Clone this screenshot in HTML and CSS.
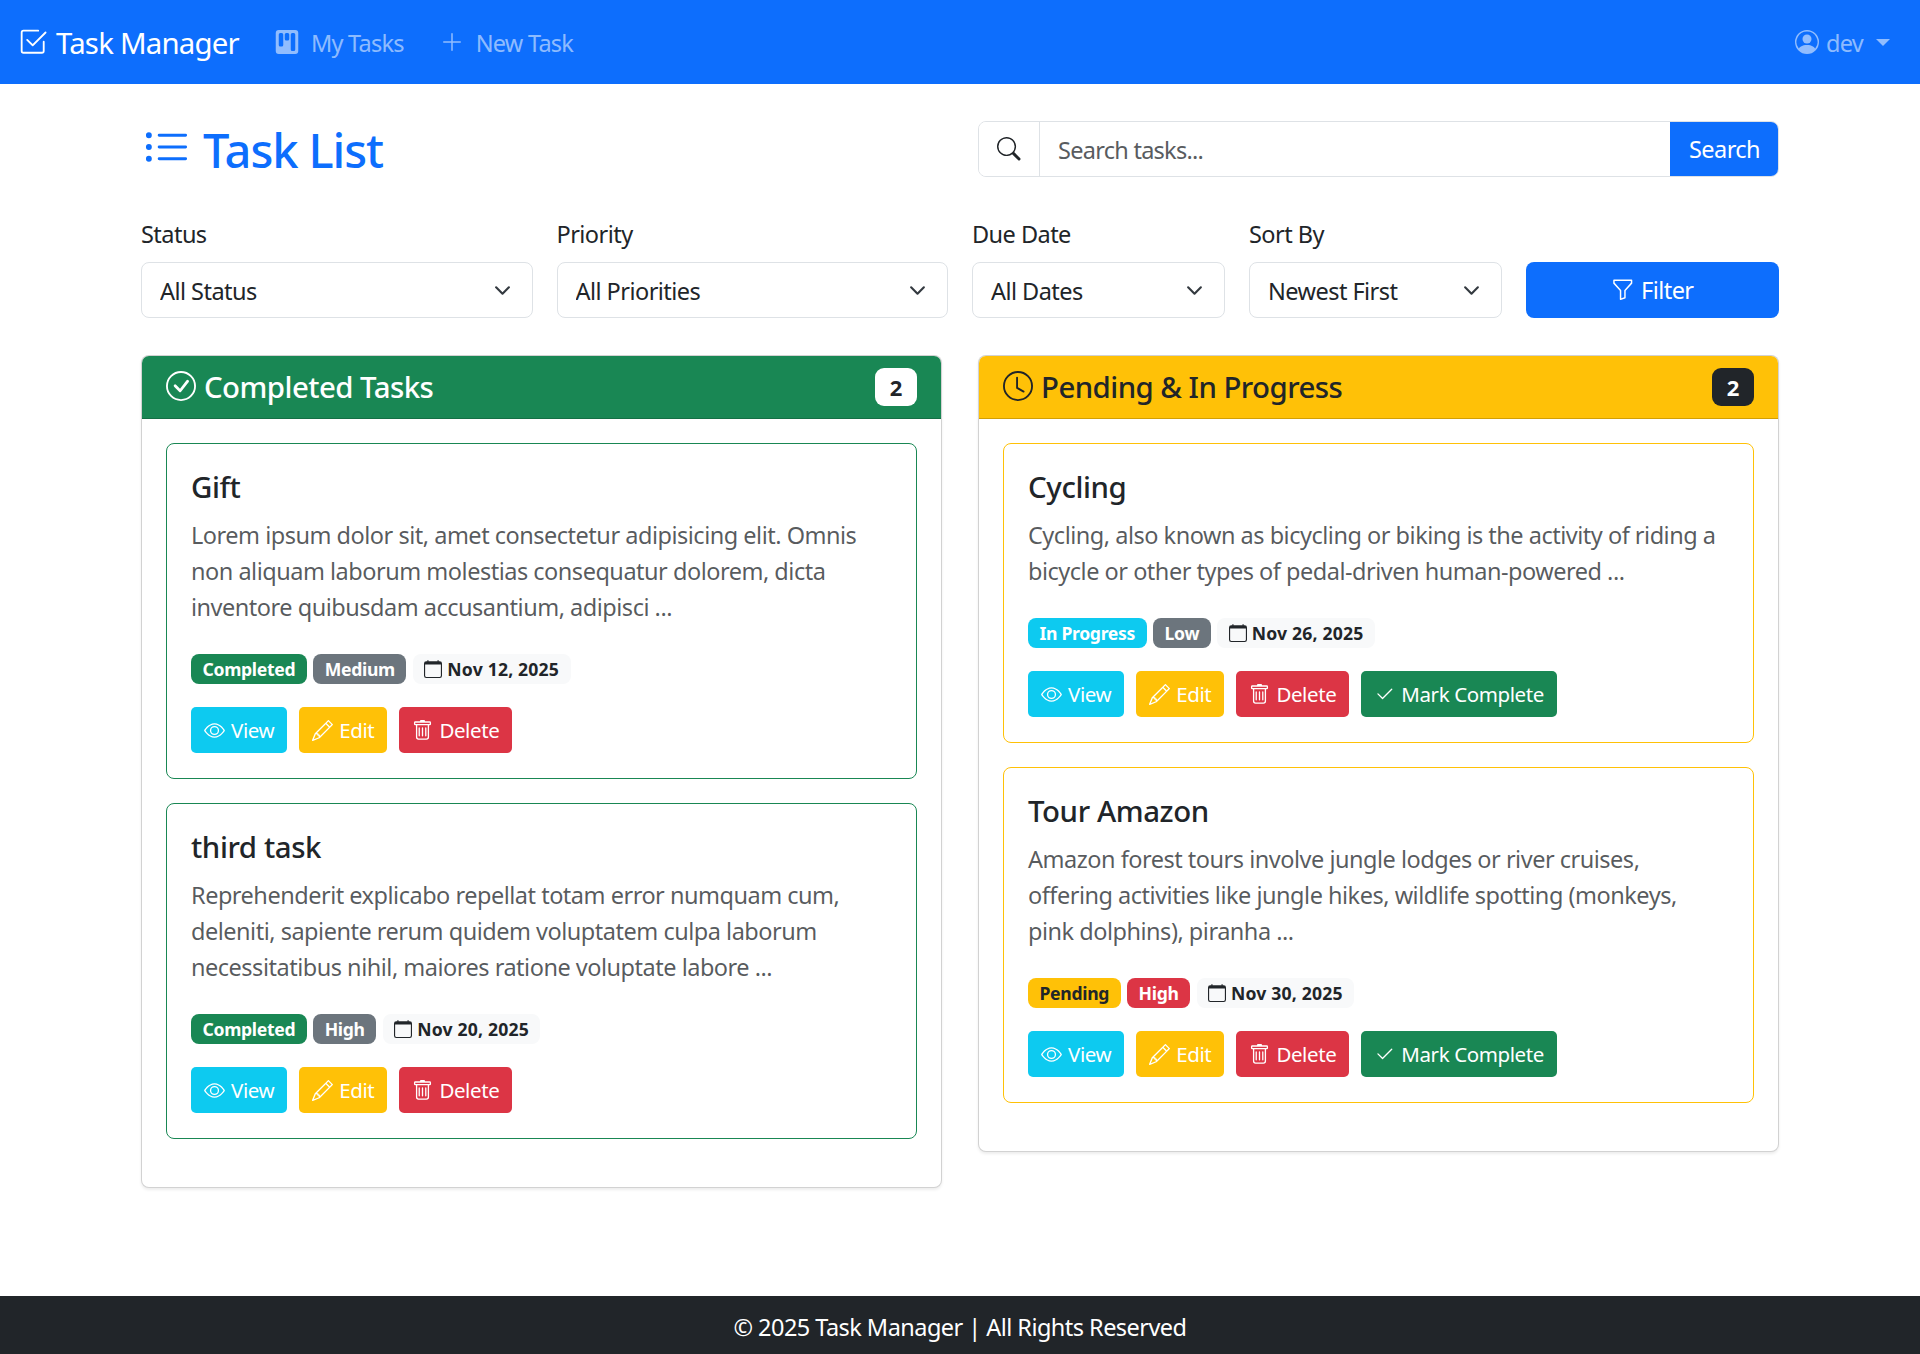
FILE: index.html
```html
<!DOCTYPE html>
<html lang="en">
<head>
<meta charset="utf-8">
<title>Task Manager</title>
<link rel="stylesheet" href="styles.css">
</head>
<body>
<nav class="navbar">
  <a class="brand" href="#"><svg class="icon brand-icon" viewBox="0 0 16 16"><path d="M3 14.5A1.5 1.5 0 0 1 1.5 13V3A1.5 1.5 0 0 1 3 1.5h8a.5.5 0 0 1 0 1H3a.5.5 0 0 0-.5.5v10a.5.5 0 0 0 .5.5h10a.5.5 0 0 0 .5-.5V8a.5.5 0 0 1 1 0v5a1.5 1.5 0 0 1-1.5 1.5z"/><path d="m8.354 10.354 7-7a.5.5 0 0 0-.708-.708L8 9.293 5.354 6.646a.5.5 0 1 0-.708.708l3 3a.5.5 0 0 0 .708 0"/></svg>Task Manager</a>
  <a class="nav-link" href="#"><svg class="icon" viewBox="0 0 16 16"><path d="M2.5 0a2 2 0 0 0-2 2v12a2 2 0 0 0 2 2h11a2 2 0 0 0 2-2V2a2 2 0 0 0-2-2zm5 2h1a1 1 0 0 1 1 1v3a1 1 0 0 1-1 1h-1a1 1 0 0 1-1-1V3a1 1 0 0 1 1-1m-5 1a1 1 0 0 1 1-1h1a1 1 0 0 1 1 1v7a1 1 0 0 1-1 1h-1a1 1 0 0 1-1-1zm9-1h1a1 1 0 0 1 1 1v10a1 1 0 0 1-1 1h-1a1 1 0 0 1-1-1V3a1 1 0 0 1 1-1" fill-rule="evenodd"/></svg>My Tasks</a>
  <a class="nav-link" href="#"><svg class="icon" viewBox="0 0 16 16"><path d="M8 2a.5.5 0 0 1 .5.5v5h5a.5.5 0 0 1 0 1h-5v5a.5.5 0 0 1-1 0v-5h-5a.5.5 0 0 1 0-1h5v-5A.5.5 0 0 1 8 2"/></svg>New Task</a>
  <a class="nav-link user" href="#"><svg class="icon" viewBox="0 0 16 16"><path d="M11 6a3 3 0 1 1-6 0 3 3 0 0 1 6 0"/><path fill-rule="evenodd" d="M0 8a8 8 0 1 1 16 0A8 8 0 0 1 0 8m8-7a7 7 0 0 0-5.468 11.37C3.242 11.226 4.805 10 8 10s4.757 1.225 5.468 2.37A7 7 0 0 0 8 1"/></svg>dev<span class="caret"></span></a>
</nav>

<main class="container">
  <div class="head-row">
    <h2 class="page-title"><svg class="icon title-icon" viewBox="0 0 16 16"><path fill-rule="evenodd" d="M5 11.5a.5.5 0 0 1 .5-.5h9a.5.5 0 0 1 0 1h-9a.5.5 0 0 1-.5-.5m0-4a.5.5 0 0 1 .5-.5h9a.5.5 0 0 1 0 1h-9a.5.5 0 0 1-.5-.5m0-4a.5.5 0 0 1 .5-.5h9a.5.5 0 0 1 0 1h-9a.5.5 0 0 1-.5-.5m-3 1a1 1 0 1 0 0-2 1 1 0 0 0 0 2m0 4a1 1 0 1 0 0-2 1 1 0 0 0 0 2m0 4a1 1 0 1 0 0-2 1 1 0 0 0 0 2"/></svg>Task List</h2>
    <form class="search-group">
      <span class="search-addon"><svg class="icon" viewBox="0 0 16 16"><path d="M11.742 10.344a6.5 6.5 0 1 0-1.397 1.398h-.001q.044.06.098.115l3.85 3.85a1 1 0 0 0 1.415-1.414l-3.85-3.85a1 1 0 0 0-.115-.1zM12 6.5a5.5 5.5 0 1 1-11 0 5.5 5.5 0 0 1 11 0"/></svg></span>
      <input class="search-input" type="text" placeholder="Search tasks...">
      <button class="search-btn" type="button">Search</button>
    </form>
  </div>

  <form class="filters">
    <div class="field"><label for="f1">Status</label><select id="f1" class="select"><option>All Status</option></select></div>
    <div class="field"><label for="f2">Priority</label><select id="f2" class="select"><option>All Priorities</option></select></div>
    <div class="field"><label for="f3">Due Date</label><select id="f3" class="select"><option>All Dates</option></select></div>
    <div class="field"><label for="f4">Sort By</label><select id="f4" class="select"><option>Newest First</option></select></div>
    <button class="filter-btn" type="button"><svg class="icon" viewBox="0 0 16 16"><path d="M1.5 1.5A.5.5 0 0 1 2 1h12a.5.5 0 0 1 .5.5v2a.5.5 0 0 1-.128.334L10 8.692V13.5a.5.5 0 0 1-.342.474l-3 1A.5.5 0 0 1 6 14.5V8.692L1.628 3.834A.5.5 0 0 1 1.5 3.5zm1 .5v1.308l4.372 4.858A.5.5 0 0 1 7 8.5v5.306l2-.666V8.5a.5.5 0 0 1 .128-.334L13.5 3.308V2z"/></svg>Filter</button>
  </form>

  <div class="columns">
    <section class="panel">
      <header class="panel-head head-success">
        <h3 class="panel-title"><svg class="icon" viewBox="0 0 16 16"><path d="M8 15A7 7 0 1 1 8 1a7 7 0 0 1 0 14m0 1A8 8 0 1 0 8 0a8 8 0 0 0 0 16"/><path d="m10.97 4.97-.02.022-3.473 4.425-2.093-2.094a.75.75 0 0 0-1.06 1.06L6.97 11.03a.75.75 0 0 0 1.079-.02l3.992-4.99a.75.75 0 0 0-1.071-1.05"/></svg>Completed Tasks</h3>
        <span class="count count-light">2</span>
      </header>
      <div class="panel-body">
        <article class="task border-success">
          <h4 class="task-title">Gift</h4>
          <p class="task-text">Lorem ipsum dolor sit, amet consectetur adipisicing elit. Omnis<br>non aliquam laborum molestias consequatur dolorem, dicta<br>inventore quibusdam accusantium, adipisci ...</p>
          <div class="badges"><span class="badge bg-success">Completed</span><span class="badge bg-secondary">Medium</span><span class="badge bg-light"><svg class="icon" viewBox="0 0 16 16"><path d="M3.5 0a.5.5 0 0 1 .5.5V1h8V.5a.5.5 0 0 1 1 0V1h1a2 2 0 0 1 2 2v11a2 2 0 0 1-2 2H2a2 2 0 0 1-2-2V3a2 2 0 0 1 2-2h1V.5a.5.5 0 0 1 .5-.5M1 4v10a1 1 0 0 0 1 1h12a1 1 0 0 0 1-1V4z"/></svg>Nov 12, 2025</span></div>
          <div class="actions">
            <a class="btn bg-info" href="#"><svg class="icon" viewBox="0 0 16 16"><path d="M16 8s-3-5.5-8-5.5S0 8 0 8s3 5.5 8 5.5S16 8 16 8M1.173 8a13 13 0 0 1 1.66-2.043C4.12 4.668 5.88 3.5 8 3.5s3.879 1.168 5.168 2.457A13 13 0 0 1 14.828 8q-.086.13-.195.288c-.335.48-.83 1.12-1.465 1.755C11.879 11.332 10.119 12.5 8 12.5s-3.879-1.168-5.168-2.457A13 13 0 0 1 1.172 8z"/><path d="M8 5.5a2.5 2.5 0 1 0 0 5 2.5 2.5 0 0 0 0-5M4.5 8a3.5 3.5 0 1 1 7 0 3.5 3.5 0 0 1-7 0"/></svg>View</a>
            <a class="btn bg-warning" href="#"><svg class="icon" viewBox="0 0 16 16"><path d="M12.146.146a.5.5 0 0 1 .708 0l3 3a.5.5 0 0 1 0 .708l-10 10a.5.5 0 0 1-.168.11l-5 2a.5.5 0 0 1-.65-.65l2-5a.5.5 0 0 1 .11-.168zM11.207 2.5 13.5 4.793 14.793 3.5 12.5 1.207zm1.586 3L10.5 3.207 4 9.707V10h.5a.5.5 0 0 1 .5.5v.5h.5a.5.5 0 0 1 .5.5v.5h.293zm-9.761 5.175-.106.106-1.528 3.821 3.821-1.528.106-.106A.5.5 0 0 1 5 12.5V12h-.5a.5.5 0 0 1-.5-.5V11h-.5a.5.5 0 0 1-.468-.325"/></svg>Edit</a>
            <a class="btn bg-danger" href="#"><svg class="icon" viewBox="0 0 16 16"><path d="M5.5 5.5A.5.5 0 0 1 6 6v6a.5.5 0 0 1-1 0V6a.5.5 0 0 1 .5-.5m2.5 0a.5.5 0 0 1 .5.5v6a.5.5 0 0 1-1 0V6a.5.5 0 0 1 .5-.5m3 .5a.5.5 0 0 0-1 0v6a.5.5 0 0 0 1 0z"/><path d="M14.5 3a1 1 0 0 1-1 1H13v9a2 2 0 0 1-2 2H5a2 2 0 0 1-2-2V4h-.5a1 1 0 0 1-1-1V2a1 1 0 0 1 1-1H6a1 1 0 0 1 1-1h2a1 1 0 0 1 1 1h3.5a1 1 0 0 1 1 1zM4.118 4 4 4.059V13a1 1 0 0 0 1 1h6a1 1 0 0 0 1-1V4.059L11.882 4zM2.5 3h11V2h-11z"/></svg>Delete</a>
          </div>
        </article>
        <article class="task border-success">
          <h4 class="task-title">third task</h4>
          <p class="task-text">Reprehenderit explicabo repellat totam error numquam cum,<br>deleniti, sapiente rerum quidem voluptatem culpa laborum<br>necessitatibus nihil, maiores ratione voluptate labore ...</p>
          <div class="badges"><span class="badge bg-success">Completed</span><span class="badge bg-secondary">High</span><span class="badge bg-light"><svg class="icon" viewBox="0 0 16 16"><path d="M3.5 0a.5.5 0 0 1 .5.5V1h8V.5a.5.5 0 0 1 1 0V1h1a2 2 0 0 1 2 2v11a2 2 0 0 1-2 2H2a2 2 0 0 1-2-2V3a2 2 0 0 1 2-2h1V.5a.5.5 0 0 1 .5-.5M1 4v10a1 1 0 0 0 1 1h12a1 1 0 0 0 1-1V4z"/></svg>Nov 20, 2025</span></div>
          <div class="actions">
            <a class="btn bg-info" href="#"><svg class="icon" viewBox="0 0 16 16"><path d="M16 8s-3-5.5-8-5.5S0 8 0 8s3 5.5 8 5.5S16 8 16 8M1.173 8a13 13 0 0 1 1.66-2.043C4.12 4.668 5.88 3.5 8 3.5s3.879 1.168 5.168 2.457A13 13 0 0 1 14.828 8q-.086.13-.195.288c-.335.48-.83 1.12-1.465 1.755C11.879 11.332 10.119 12.5 8 12.5s-3.879-1.168-5.168-2.457A13 13 0 0 1 1.172 8z"/><path d="M8 5.5a2.5 2.5 0 1 0 0 5 2.5 2.5 0 0 0 0-5M4.5 8a3.5 3.5 0 1 1 7 0 3.5 3.5 0 0 1-7 0"/></svg>View</a>
            <a class="btn bg-warning" href="#"><svg class="icon" viewBox="0 0 16 16"><path d="M12.146.146a.5.5 0 0 1 .708 0l3 3a.5.5 0 0 1 0 .708l-10 10a.5.5 0 0 1-.168.11l-5 2a.5.5 0 0 1-.65-.65l2-5a.5.5 0 0 1 .11-.168zM11.207 2.5 13.5 4.793 14.793 3.5 12.5 1.207zm1.586 3L10.5 3.207 4 9.707V10h.5a.5.5 0 0 1 .5.5v.5h.5a.5.5 0 0 1 .5.5v.5h.293zm-9.761 5.175-.106.106-1.528 3.821 3.821-1.528.106-.106A.5.5 0 0 1 5 12.5V12h-.5a.5.5 0 0 1-.5-.5V11h-.5a.5.5 0 0 1-.468-.325"/></svg>Edit</a>
            <a class="btn bg-danger" href="#"><svg class="icon" viewBox="0 0 16 16"><path d="M5.5 5.5A.5.5 0 0 1 6 6v6a.5.5 0 0 1-1 0V6a.5.5 0 0 1 .5-.5m2.5 0a.5.5 0 0 1 .5.5v6a.5.5 0 0 1-1 0V6a.5.5 0 0 1 .5-.5m3 .5a.5.5 0 0 0-1 0v6a.5.5 0 0 0 1 0z"/><path d="M14.5 3a1 1 0 0 1-1 1H13v9a2 2 0 0 1-2 2H5a2 2 0 0 1-2-2V4h-.5a1 1 0 0 1-1-1V2a1 1 0 0 1 1-1H6a1 1 0 0 1 1-1h2a1 1 0 0 1 1 1h3.5a1 1 0 0 1 1 1zM4.118 4 4 4.059V13a1 1 0 0 0 1 1h6a1 1 0 0 0 1-1V4.059L11.882 4zM2.5 3h11V2h-11z"/></svg>Delete</a>
          </div>
        </article>
      </div>
    </section>

    <section class="panel">
      <header class="panel-head head-warning">
        <h3 class="panel-title"><svg class="icon" viewBox="0 0 16 16"><path d="M8 3.5a.5.5 0 0 0-1 0V9a.5.5 0 0 0 .252.434l3.5 2a.5.5 0 0 0 .496-.868L8 8.71z"/><path d="M8 16A8 8 0 1 0 8 0a8 8 0 0 0 0 16m7-8A7 7 0 1 1 1 8a7 7 0 0 1 14 0"/></svg>Pending &amp; In Progress</h3>
        <span class="count count-dark">2</span>
      </header>
      <div class="panel-body">
        <article class="task border-warning">
          <h4 class="task-title">Cycling</h4>
          <p class="task-text">Cycling, also known as bicycling or biking is the activity of riding a<br>bicycle or other types of pedal-driven human-powered ...</p>
          <div class="badges"><span class="badge bg-info">In Progress</span><span class="badge bg-secondary">Low</span><span class="badge bg-light"><svg class="icon" viewBox="0 0 16 16"><path d="M3.5 0a.5.5 0 0 1 .5.5V1h8V.5a.5.5 0 0 1 1 0V1h1a2 2 0 0 1 2 2v11a2 2 0 0 1-2 2H2a2 2 0 0 1-2-2V3a2 2 0 0 1 2-2h1V.5a.5.5 0 0 1 .5-.5M1 4v10a1 1 0 0 0 1 1h12a1 1 0 0 0 1-1V4z"/></svg>Nov 26, 2025</span></div>
          <div class="actions">
            <a class="btn bg-info" href="#"><svg class="icon" viewBox="0 0 16 16"><path d="M16 8s-3-5.5-8-5.5S0 8 0 8s3 5.5 8 5.5S16 8 16 8M1.173 8a13 13 0 0 1 1.66-2.043C4.12 4.668 5.88 3.5 8 3.5s3.879 1.168 5.168 2.457A13 13 0 0 1 14.828 8q-.086.13-.195.288c-.335.48-.83 1.12-1.465 1.755C11.879 11.332 10.119 12.5 8 12.5s-3.879-1.168-5.168-2.457A13 13 0 0 1 1.172 8z"/><path d="M8 5.5a2.5 2.5 0 1 0 0 5 2.5 2.5 0 0 0 0-5M4.5 8a3.5 3.5 0 1 1 7 0 3.5 3.5 0 0 1-7 0"/></svg>View</a>
            <a class="btn bg-warning" href="#"><svg class="icon" viewBox="0 0 16 16"><path d="M12.146.146a.5.5 0 0 1 .708 0l3 3a.5.5 0 0 1 0 .708l-10 10a.5.5 0 0 1-.168.11l-5 2a.5.5 0 0 1-.65-.65l2-5a.5.5 0 0 1 .11-.168zM11.207 2.5 13.5 4.793 14.793 3.5 12.5 1.207zm1.586 3L10.5 3.207 4 9.707V10h.5a.5.5 0 0 1 .5.5v.5h.5a.5.5 0 0 1 .5.5v.5h.293zm-9.761 5.175-.106.106-1.528 3.821 3.821-1.528.106-.106A.5.5 0 0 1 5 12.5V12h-.5a.5.5 0 0 1-.5-.5V11h-.5a.5.5 0 0 1-.468-.325"/></svg>Edit</a>
            <a class="btn bg-danger" href="#"><svg class="icon" viewBox="0 0 16 16"><path d="M5.5 5.5A.5.5 0 0 1 6 6v6a.5.5 0 0 1-1 0V6a.5.5 0 0 1 .5-.5m2.5 0a.5.5 0 0 1 .5.5v6a.5.5 0 0 1-1 0V6a.5.5 0 0 1 .5-.5m3 .5a.5.5 0 0 0-1 0v6a.5.5 0 0 0 1 0z"/><path d="M14.5 3a1 1 0 0 1-1 1H13v9a2 2 0 0 1-2 2H5a2 2 0 0 1-2-2V4h-.5a1 1 0 0 1-1-1V2a1 1 0 0 1 1-1H6a1 1 0 0 1 1-1h2a1 1 0 0 1 1 1h3.5a1 1 0 0 1 1 1zM4.118 4 4 4.059V13a1 1 0 0 0 1 1h6a1 1 0 0 0 1-1V4.059L11.882 4zM2.5 3h11V2h-11z"/></svg>Delete</a>
            <a class="btn bg-success" href="#"><svg class="icon" viewBox="0 0 16 16"><path d="M13.854 3.646a.5.5 0 0 1 0 .708l-7 7a.5.5 0 0 1-.708 0l-3.5-3.5a.5.5 0 1 1 .708-.708L6.5 10.293l6.646-6.647a.5.5 0 0 1 .708 0"/></svg>Mark Complete</a>
          </div>
        </article>
        <article class="task border-warning">
          <h4 class="task-title">Tour Amazon</h4>
          <p class="task-text">Amazon forest tours involve jungle lodges or river cruises,<br>offering activities like jungle hikes, wildlife spotting (monkeys,<br>pink dolphins), piranha ...</p>
          <div class="badges"><span class="badge bg-warning-dark">Pending</span><span class="badge bg-danger">High</span><span class="badge bg-light"><svg class="icon" viewBox="0 0 16 16"><path d="M3.5 0a.5.5 0 0 1 .5.5V1h8V.5a.5.5 0 0 1 1 0V1h1a2 2 0 0 1 2 2v11a2 2 0 0 1-2 2H2a2 2 0 0 1-2-2V3a2 2 0 0 1 2-2h1V.5a.5.5 0 0 1 .5-.5M1 4v10a1 1 0 0 0 1 1h12a1 1 0 0 0 1-1V4z"/></svg>Nov 30, 2025</span></div>
          <div class="actions">
            <a class="btn bg-info" href="#"><svg class="icon" viewBox="0 0 16 16"><path d="M16 8s-3-5.5-8-5.5S0 8 0 8s3 5.5 8 5.5S16 8 16 8M1.173 8a13 13 0 0 1 1.66-2.043C4.12 4.668 5.88 3.5 8 3.5s3.879 1.168 5.168 2.457A13 13 0 0 1 14.828 8q-.086.13-.195.288c-.335.48-.83 1.12-1.465 1.755C11.879 11.332 10.119 12.5 8 12.5s-3.879-1.168-5.168-2.457A13 13 0 0 1 1.172 8z"/><path d="M8 5.5a2.5 2.5 0 1 0 0 5 2.5 2.5 0 0 0 0-5M4.5 8a3.5 3.5 0 1 1 7 0 3.5 3.5 0 0 1-7 0"/></svg>View</a>
            <a class="btn bg-warning" href="#"><svg class="icon" viewBox="0 0 16 16"><path d="M12.146.146a.5.5 0 0 1 .708 0l3 3a.5.5 0 0 1 0 .708l-10 10a.5.5 0 0 1-.168.11l-5 2a.5.5 0 0 1-.65-.65l2-5a.5.5 0 0 1 .11-.168zM11.207 2.5 13.5 4.793 14.793 3.5 12.5 1.207zm1.586 3L10.5 3.207 4 9.707V10h.5a.5.5 0 0 1 .5.5v.5h.5a.5.5 0 0 1 .5.5v.5h.293zm-9.761 5.175-.106.106-1.528 3.821 3.821-1.528.106-.106A.5.5 0 0 1 5 12.5V12h-.5a.5.5 0 0 1-.5-.5V11h-.5a.5.5 0 0 1-.468-.325"/></svg>Edit</a>
            <a class="btn bg-danger" href="#"><svg class="icon" viewBox="0 0 16 16"><path d="M5.5 5.5A.5.5 0 0 1 6 6v6a.5.5 0 0 1-1 0V6a.5.5 0 0 1 .5-.5m2.5 0a.5.5 0 0 1 .5.5v6a.5.5 0 0 1-1 0V6a.5.5 0 0 1 .5-.5m3 .5a.5.5 0 0 0-1 0v6a.5.5 0 0 0 1 0z"/><path d="M14.5 3a1 1 0 0 1-1 1H13v9a2 2 0 0 1-2 2H5a2 2 0 0 1-2-2V4h-.5a1 1 0 0 1-1-1V2a1 1 0 0 1 1-1H6a1 1 0 0 1 1-1h2a1 1 0 0 1 1 1h3.5a1 1 0 0 1 1 1zM4.118 4 4 4.059V13a1 1 0 0 0 1 1h6a1 1 0 0 0 1-1V4.059L11.882 4zM2.5 3h11V2h-11z"/></svg>Delete</a>
            <a class="btn bg-success" href="#"><svg class="icon" viewBox="0 0 16 16"><path d="M13.854 3.646a.5.5 0 0 1 0 .708l-7 7a.5.5 0 0 1-.708 0l-3.5-3.5a.5.5 0 1 1 .708-.708L6.5 10.293l6.646-6.647a.5.5 0 0 1 .708 0"/></svg>Mark Complete</a>
          </div>
        </article>
      </div>
    </section>
  </div>
</main>

<footer class="footer">© 2025 Task Manager | All Rights Reserved</footer>
</body>
</html>
```

FILE: styles.css
```css
* { box-sizing: border-box; }
html, body { height: 100%; }
body {
  margin: 0;
  display: flex;
  flex-direction: column;
  min-height: 1354px;
  font-family: "Noto Sans", "Open Sans", sans-serif;
  font-size: 23.5px;
  line-height: 35px;
  letter-spacing: -0.54px;
  color: #212529;
  background: #fff;
}
a { text-decoration: none; }
h2, h3, h4, p { margin: 0; font-weight: 500; }
.icon { width: 1em; height: 1em; fill: currentColor; flex: none; display: block; }

.navbar {
  height: 84px;
  background: #0d6efd;
  display: flex;
  align-items: center;
  padding: 2px 30px 0 18px;
}
.brand {
  display: flex;
  align-items: center;
  gap: 8.6px;
  color: #fff;
  font-size: 29.4px;
  letter-spacing: -0.8px;
  margin-right: 36px;
}
.brand-icon { width: 29.4px; height: 29.4px; margin-top: -3px; }
.nav-link {
  display: flex;
  align-items: center;
  gap: 12px;
  color: rgba(255,255,255,.55);
  letter-spacing: -0.75px;
  margin-right: 36px;
}
.nav-link .icon { width: 24px; height: 24px; margin-top: -2px; }
.user { margin-left: auto; margin-right: 0; gap: 7px; }
.caret {
  width: 0; height: 0;
  margin: -2px 0 0 6px;
  border-top: 7px solid currentColor;
  border-left: 7px solid transparent;
  border-right: 7px solid transparent;
}

.container { width: 1638px; margin: 0 auto; flex: 1; }
.head-row {
  display: flex;
  justify-content: space-between;
  align-items: center;
  padding-top: 37px;
  height: 93px;
}
.page-title {
  display: flex;
  align-items: center;
  gap: 13px;
  color: #0d6efd;
  font-size: 47px;
  line-height: 56px;
  letter-spacing: -1.06px;
  padding: 1px 0 0 2px;
}
.title-icon { width: 47px; height: 47px; margin-top: -3px; }
.search-group {
  width: 801px;
  height: 56px;
  display: flex;
  border: 1px solid #dee2e6;
  border-radius: 8px;
  overflow: hidden;
}
.search-addon {
  width: 61px;
  display: flex;
  align-items: center;
  justify-content: center;
  background: #fff;
  border-right: 1px solid #dee2e6;
}
.search-input {
  flex: 1;
  min-width: 0;
  border: 0;
  outline: 0;
  padding: 2px 18px 0;
  font: inherit;
  letter-spacing: -0.73px;
  color: #212529;
}
.search-input::placeholder { color: #595c5f; opacity: 1; }
.search-btn {
  width: 109px;
  border: 0;
  margin: -1px -1px -1px 0;
  background: #0d6efd;
  color: #fff;
  font: inherit;
  letter-spacing: inherit;
}

.filters {
  display: grid;
  grid-template-columns: 391.5px 391.5px 253px 253px 253px;
  column-gap: 24px;
  align-items: end;
  margin-top: 39px;
}
.field { display: flex; flex-direction: column; }
.field label { line-height: 35px; padding-top: 1px; margin-bottom: 10px; }
.select {
  height: 56px;
  appearance: none;
  width: 100%;
  padding: 2px 18px 0;
  font: inherit;
  letter-spacing: inherit;
  color: #212529;
  background: #fff url("data:image/svg+xml,%3csvg xmlns='http://www.w3.org/2000/svg' viewBox='0 0 16 16'%3e%3cpath fill='none' stroke='%23343a40' stroke-linecap='round' stroke-linejoin='round' stroke-width='2' d='m2 5 6 6 6-6'/%3e%3c/svg%3e") no-repeat right 18px center / 23px 17px;
  border: 1px solid #dee2e6;
  border-radius: 8px;
}
.filter-btn {
  height: 56px;
  display: flex;
  align-items: center;
  justify-content: center;
  gap: 6px;
  border: 0;
  border-radius: 8px;
  background: #0d6efd;
  color: #fff;
  font: inherit;
  letter-spacing: inherit;
}

.columns {
  display: grid;
  grid-template-columns: 801px 801px;
  column-gap: 36px;
  align-items: start;
  margin-top: 37px;
}
.panel {
  border: 1px solid rgba(0,0,0,.175);
  border-radius: 8px;
  background: #fff;
  box-shadow: 0 2px 3px rgba(0,0,0,.075);
  overflow: hidden;
}
.panel-head {
  height: 63px;
  display: flex;
  align-items: center;
  justify-content: space-between;
  padding: 0 24px;
  border-bottom: 1px solid rgba(0,0,0,.175);
}
.head-success { background: #198754; color: #fff; }
.head-warning { background: #ffc107; color: #212529; }
.panel-title {
  display: flex;
  align-items: center;
  gap: 8px;
  font-size: 29.4px;
  line-height: 35px;
}
.panel-title .icon { width: 30px; height: 30px; margin-top: -2px; }
.count {
  width: 42px;
  height: 38px;
  border-radius: 9px;
  display: flex;
  align-items: center;
  justify-content: center;
  font-weight: 700;
  font-size: 22px;
  letter-spacing: 0;
}
.count-light { background: #fff; color: #212529; }
.count-dark { background: #212529; color: #fff; }
.panel-body { padding: 24px; }

.task {
  border: 1px solid;
  border-radius: 8px;
  padding: 26px 24px 25px;
  margin-bottom: 24px;
}
.border-success { border-color: #198754; }
.border-warning { border-color: #ffc107; }
.task-title { font-size: 29.4px; line-height: 35px; letter-spacing: -0.4px; margin-bottom: 12px; }
.task-text { font-weight: 400; color: rgba(33,37,41,.75); line-height: 36px; letter-spacing: -0.49px; }
.badges { display: flex; gap: 6.5px; margin-top: 29px; }
.badge {
  height: 30px;
  display: flex;
  align-items: center;
  gap: 5px;
  padding: 0 11.5px;
  border-radius: 8px;
  font-size: 17.6px;
  font-weight: 700;
  color: #fff;
  letter-spacing: -0.32px;
}
.badge .icon { width: 18px; height: 18px; }
.actions { display: flex; gap: 12px; margin-top: 23px; }
.btn {
  height: 46px;
  display: flex;
  align-items: center;
  gap: 6px;
  padding: 0 13px;
  border-radius: 5px;
  color: #fff;
  font-size: 20.5px;
  letter-spacing: -0.4px;
}
.btn .icon { width: 21px; height: 21px; }
.bg-success { background: #198754; }
.bg-secondary { background: #6c757d; }
.bg-info { background: #0dcaf0; }
.bg-warning { background: #ffc107; }
.bg-warning-dark { background: #ffc107; color: #212529; }
.bg-danger { background: #dc3545; }
.bg-light { background: #f8f9fa; color: #212529; letter-spacing: 0.18px; }

.footer {
  height: 58px;
  padding-top: 4px;
  background: #212529;
  color: #fff;
  display: flex;
  align-items: center;
  justify-content: center;
}
```
